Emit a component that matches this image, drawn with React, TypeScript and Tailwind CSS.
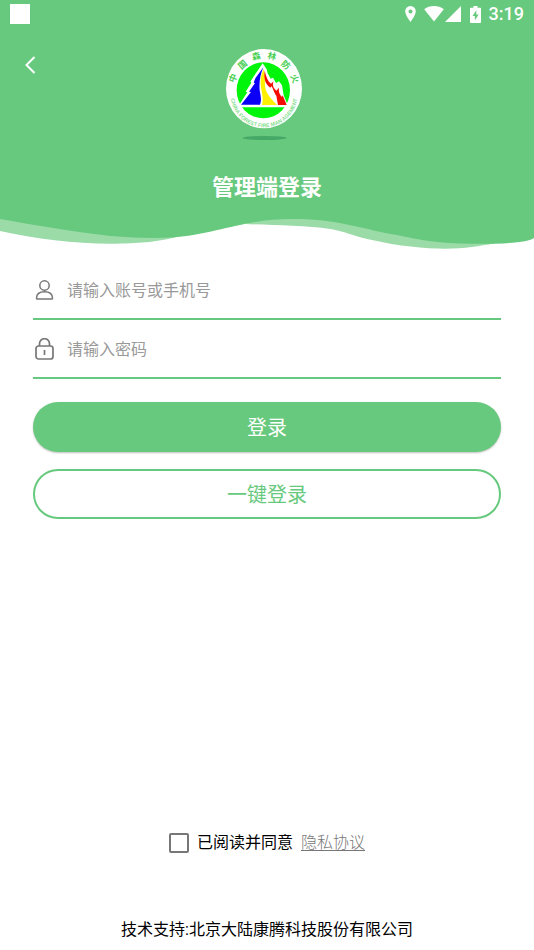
import React from "react";

const RING_CHARS = [
  { char: "中", x: 57, y: 114, angle: -68 },
  { char: "国", x: 86, y: 74, angle: -40 },
  { char: "森", x: 127, y: 49, angle: -13 },
  { char: "林", x: 174, y: 49, angle: 13 },
  { char: "防", x: 215, y: 75, angle: 40 },
  { char: "火", x: 242, y: 116, angle: 68 },
];

function StatusBar() {
  return (
    <div className="flex h-7 items-center justify-between px-[10px] text-white">
      <div className="size-5 bg-white" />
      <div className="flex items-center">
        <svg className="mr-2 h-4 w-[11px]" viewBox="0 0 11 16" fill="currentColor">
          <path
            fillRule="evenodd"
            d="M5.500 0A5.300 5.300 0 0 0 .2 5.300C.2 9.300 5.500 16 5.500 16S10.800 9.300 10.800 5.300A5.300 5.300 0 0 0 5.500 0Zm0 3.400a2 2 0 1 1 0 4 2 2 0 0 1 0-4Z"
          />
        </svg>
        <svg className="h-4 w-5" viewBox="0 0 20 16" fill="currentColor">
          <path d="M10 15.500 .2 3.200C3 1 6.300 0 10 0s7 1 9.800 3.200Z" />
        </svg>
        <svg className="ml-[1px] h-4 w-4" viewBox="0 0 16 16" fill="currentColor">
          <path d="M16 0v16H0Z" />
        </svg>
        <svg className="ml-[9px] h-[17px] w-[11px]" viewBox="0 0 11 17" fill="currentColor">
          <path
            fillRule="evenodd"
            d="M3.500 0h4v1.700H10c.6 0 1 .4 1 1V16c0 .6-.4 1-1 1H1c-.6 0-1-.4-1-1V2.700c0-.6.4-1 1-1h2.500ZM6.300 4.300 2.500 10h2.400v4.300L8.700 8.400H6.300Z"
          />
        </svg>
        <span className="ml-2 font-[Roboto,sans-serif] text-lg leading-7 font-medium">3:19</span>
      </div>
    </div>
  );
}

function Emblem() {
  return (
    <svg className="h-[92px] w-[76px]" viewBox="36 27 228 276" role="img" aria-label="中国森林防火">
      <defs>
        <path id="ring" d="M49 160A101 102 0 0 0 251 160" />
        <filter id="soften" x="-20%" y="-80%" width="140%" height="260%">
          <feGaussianBlur stdDeviation="2" />
        </filter>
      </defs>
      <ellipse cx="150" cy="146" rx="114" ry="119" fill="#fff" />
      <ellipse cx="148" cy="151" rx="80" ry="84" fill="#00f50a" />
      <path
        d="m146 70-28 41-9 14 3 3-17 27 5 2-26 40v5h148v-5l-13-31-5-30-9-12-9 5-9-16-7 3-9-16-3-12Z"
        fill="#fff"
      />
      <path
        d="m148 82-24 33-5 13 4 1-18 26 6 1-30 38h57c6-14 1-30-1-43-2-26 2-48 11-69Z"
        fill="#0b00f5"
      />
      <path d="M149 87c-12 25-10 45-6 67 3 16 5 27 1 41h46c-20-19-36-36-37-60-1-18 1-32-4-48Z" fill="#fff000" />
      <path
        d="M152 92c-2 20-1 34 13 48 3 4 8 2 7-3 8 14 8 21 15 30l5 28h26l-12-29-2 5c-8-8-11-18-9-28l-8 9c-9-8-13-17-8-28l-8 7c-10-8-15-22-19-39Z"
        fill="#f50a00"
      />
      <g
        fill="#48cf52"
        className="font-['Noto_Sans_CJK_SC',sans-serif] text-[26px] font-bold"
        textAnchor="middle"
      >
        {RING_CHARS.map(({ char, x, y, angle }) => (
          <text key={char} x={x} y={y} dy="9" transform={`rotate(${angle} ${x} ${y})`}>
            {char}
          </text>
        ))}
      </g>
      <text fill="#86e090" className="font-['Liberation_Sans',sans-serif] text-[16px] font-bold" textAnchor="middle">
        <textPath href="#ring" startOffset="50%">
          CHINA FOREST FIRE MAN AGEMENT
        </textPath>
      </text>
      <ellipse cx="152" cy="294" rx="66" ry="6" fill="#45a866" filter="url(#soften)" />
    </svg>
  );
}

function Wave() {
  return (
    <svg className="block h-8 w-full" viewBox="0 218 534 32" preserveAspectRatio="none" aria-hidden="true">
      <path
        d="M0 218V231C35 239 75 243.500 110 243.700C140 243.500 155 242 172 238L245 224C270 225 305 225.500 330 229C348 232 352 236 372 240C398 246 425 248.700 445 248.700C465 248.500 480 246 494 243.500L534 218Z"
        fill="#9adba8"
      />
      <path
        d="M0 218V219C35 225 75 232 110 236C135 238 155 238.300 172 237.500C220 234 240 219 294 219C340 219 365 230 397 235C420 240 440 243.500 470 243.700C500 244 528 243 534 238V218Z"
        fill="#67c97d"
      />
    </svg>
  );
}

function UserIcon() {
  return (
    <svg className="size-[22px] shrink-0" viewBox="0 0 22 22" fill="none" stroke="#777" strokeWidth="1.500">
      <circle cx="11.500" cy="6.500" r="4.700" />
      <path d="M3.500 19.300c0-4.400 3.200-6.500 8-6.500s8 2.100 8 6.500c0 .5-.3.800-.8.800H4.300c-.5 0-.8-.3-.8-.8Z" />
    </svg>
  );
}

function LockIcon() {
  return (
    <svg className="size-[22px] shrink-0" viewBox="0 0 22 22" fill="none" stroke="#777" strokeWidth="1.700">
      <rect x="3" y="8" width="17" height="13" rx="2.500" />
      <path d="M6.500 8V5.700a5 5 0 0 1 10 0V8M11.500 12v5" />
    </svg>
  );
}

type FieldProps = { icon: React.ReactNode; label: string; type: string };

function Field({ icon, label, type }: FieldProps) {
  return (
    <label className="flex h-[59px] items-center gap-3 border-b-2 border-[#67c97d]">
      {icon}
      <input
        type={type}
        aria-label={label}
        placeholder={label}
        className="min-w-0 flex-1 bg-transparent pt-[2px] text-base outline-none placeholder:text-[#999]"
      />
    </label>
  );
}

export default function App() {
  return (
    <div className="flex min-h-screen flex-col bg-white font-[Roboto,'Noto_Sans_CJK_SC',sans-serif] text-black">
      <header>
        <div className="bg-[#67c97d]">
          <StatusBar />
          <div className="grid grid-cols-[1fr_auto_1fr] pt-[21px]">
            <button type="button" aria-label="返回" className="ml-5 size-5 self-start pt-[6px]">
              <svg className="h-5 w-5" viewBox="0 0 20 20" fill="none" stroke="#fff" strokeWidth="2">
                <path d="M14.500 2 6.500 10l8 8" />
              </svg>
            </button>
            <div className="pr-[6px]">
              <Emblem />
            </div>
          </div>
          <h1 className="pt-[31px] pb-[14px] text-center text-[22px] leading-8 font-bold text-white">管理端登录</h1>
        </div>
        <Wave />
      </header>

      <main className="flex flex-1 flex-col px-[33px] pt-[11px]">
        <form onSubmit={(event) => event.preventDefault()}>
          <Field icon={<UserIcon />} label="请输入账号或手机号" type="text" />
          <Field icon={<LockIcon />} label="请输入密码" type="password" />
          <div className="mt-[23px] flex flex-col gap-[17px]">
            <button
              type="submit"
              className="h-[50px] rounded-full bg-[#67c97d] pt-[2px] text-xl text-white shadow-[0_1px_2px_rgba(0,0,0,0.25)]"
            >
              登录
            </button>
            <button
              type="button"
              className="h-[50px] rounded-full border-2 border-[#67c97d] pt-[2px] text-xl text-[#67c97d]"
            >
              一键登录
            </button>
          </div>
        </form>

        <div className="mt-auto flex items-center justify-center gap-2 pt-10">
          <label className="flex items-center gap-2">
            <input
              type="checkbox"
              className="size-5 appearance-none rounded-xs border-2 border-[#777] checked:bg-[#67c97d]"
            />
            <span className="leading-6">已阅读并同意</span>
          </label>
          <a href="#privacy" className="leading-6 font-light text-[#777] underline underline-offset-2">
            隐私协议
          </a>
        </div>
      </main>

      <footer className="pt-[63px] pb-2 text-center leading-6">技术支持:北京大陆康腾科技股份有限公司</footer>
    </div>
  );
}
